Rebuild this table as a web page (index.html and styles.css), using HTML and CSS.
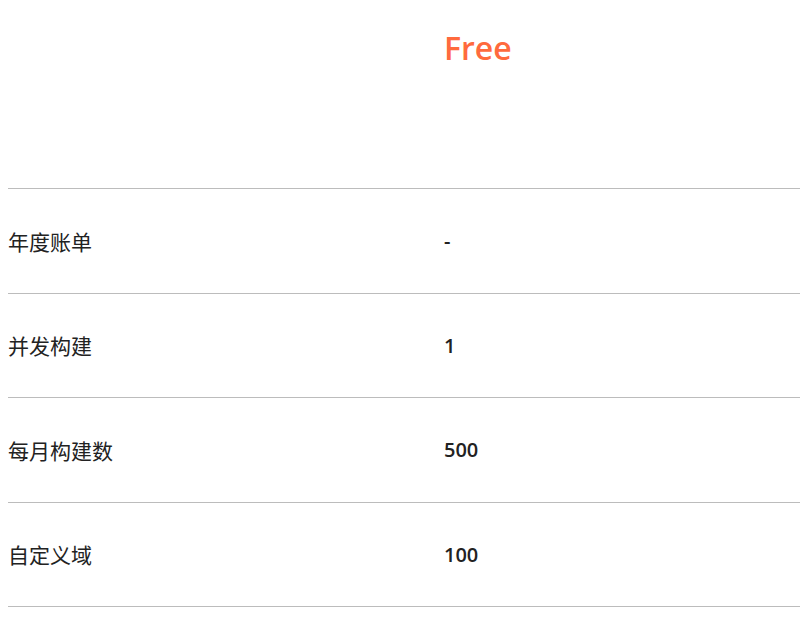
FILE: index.html
```html
<!DOCTYPE html>
<html lang="zh">
<head>
<meta charset="utf-8">
<link rel="stylesheet" href="styles.css">
</head>
<body>
<div class="plans">
  <div class="head">
    <div class="cell"></div>
    <div class="cell plan-name">Free</div>
  </div>
  <div class="row"><div class="cell label">年度账单</div><div class="cell value">-</div></div>
  <div class="row"><div class="cell label">并发构建</div><div class="cell value">1</div></div>
  <div class="row"><div class="cell label">每月构建数</div><div class="cell value">500</div></div>
  <div class="row"><div class="cell label">自定义域</div><div class="cell value">100</div></div>
</div>
</body>
</html>
```
FILE: styles.css
```css
html, body {
  margin: 0;
  background: #fff;
}
body {
  padding: 8px 0 0 8px;
  font-family: "Open Sans", "Noto Sans CJK SC", sans-serif;
  color: #222;
  overflow: hidden;
}
.plans {
  width: 792px;
}
.head, .row {
  display: grid;
  grid-template-columns: 436px 1fr;
}
.head {
  height: 180px;
  border-bottom: 1px solid #bcbcbc;
}
.plan-name {
  padding-top: 18px;
  font-size: 32px;
  font-weight: 600;
  color: #ff6a3d;
  line-height: 44px;
}
.row {
  height: 103.5px;
  border-bottom: 1px solid #bcbcbc;
  align-items: center;
  font-size: 20px;
  line-height: 28px;
}
.label {
  font-family: "Noto Sans CJK SC", sans-serif;
  font-size: 21px;
  font-weight: 400;
}
.value {
  font-weight: 600;
  padding-top: 1px;
}
```
